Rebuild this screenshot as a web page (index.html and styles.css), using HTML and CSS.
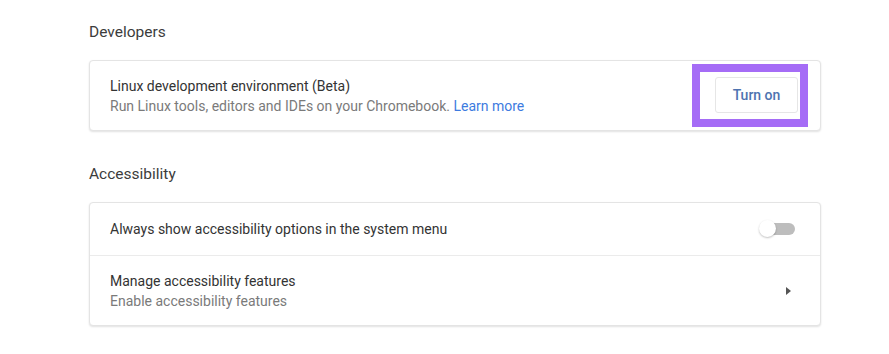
FILE: index.html
```html
<!DOCTYPE html>
<html lang="en">
<head>
    <meta charset="UTF-8">
    <meta name="viewport" content="width=device-width, initial-scale=1.0">
    <title>Settings</title>
    <link rel="stylesheet" href="styles.css">
</head>
<body>

<div class="page">
    <div class="section">
        <h2 class="section-title">Developers</h2>
        <div class="card">
            <div class="row row-tall row-action">
                <div class="row-text">
                    <div class="row-title">Linux development environment (Beta)</div>
                    <div class="row-sub">Run Linux tools, editors and IDEs on your Chromebook. <a href="#" class="link">Learn more</a></div>
                </div>
                <div class="highlight">
                    <button class="action-button">Turn on</button>
                </div>
            </div>
        </div>
    </div>

    <div class="section">
        <h2 class="section-title">Accessibility</h2>
        <div class="card">
            <div class="row row-short">
                <div class="row-text">
                    <div class="row-title">Always show accessibility options in the system menu</div>
                </div>
                <div class="toggle">
                    <div class="toggle-track"></div>
                    <div class="toggle-knob"></div>
                </div>
            </div>
            <div class="row row-tall row-divided">
                <div class="row-text">
                    <div class="row-title">Manage accessibility features</div>
                    <div class="row-sub">Enable accessibility features</div>
                </div>
                <div class="arrow"></div>
            </div>
        </div>
    </div>
</div>

</body>
</html>
```

FILE: styles.css
```css
body {
    margin: 0;
    background: #fff;
    font-family: Roboto, 'Noto Sans', sans-serif;
    color: #333;
}
.page {
    width: 732px;
    padding: 22px 0 0 89px;
}
.section {
    margin-bottom: 33px;
}
.section-title {
    margin: 0 0 18px 0;
    font-size: 15.5px;
    font-weight: 400;
    line-height: 20px;
    color: #3c3c3c;
}
.card {
    background: #fff;
    border: 1px solid #e4e4e4;
    border-radius: 4px;
    box-shadow: 0 1px 2px rgba(0, 0, 0, 0.12);
}
.row {
    display: flex;
    align-items: center;
    justify-content: space-between;
    padding: 0 13px 0 20px;
}
.row-action {
    padding-right: 12px;
}
.row-short {
    height: 52px;
}
.row-tall {
    height: 69px;
}
.row-divided {
    border-top: 1px solid #ebebeb;
}
.row-title {
    font-size: 14px;
    line-height: 20px;
    color: #333;
}
.row-sub {
    font-size: 14px;
    line-height: 20px;
    color: #7a7a7a;
}
.link {
    color: #3d7be0;
    text-decoration: none;
}
.highlight {
    border: 8px solid #a56cf6;
    padding: 5px 2px 6px 15px;
    display: flex;
}
.action-button {
    width: 83px;
    height: 36px;
    background: #fff;
    border: 1px solid #e6e6e6;
    border-radius: 3px;
    font-family: Roboto, sans-serif;
    font-size: 14px;
    font-weight: 500;
    color: #4e73b0;
    cursor: pointer;
}
.toggle {
    position: relative;
    width: 36px;
    height: 20px;
    margin-right: 12px;
}
.toggle-track {
    position: absolute;
    left: 4px;
    top: 4px;
    width: 32px;
    height: 12px;
    border-radius: 6px;
    background: #bdbdbd;
}
.toggle-knob {
    position: absolute;
    left: 0;
    top: 1px;
    width: 17px;
    height: 17px;
    border-radius: 50%;
    background: #fff;
    box-shadow: 0 1px 2px rgba(0, 0, 0, 0.25);
}
.arrow {
    width: 0;
    height: 0;
    border-top: 4px solid transparent;
    border-bottom: 4px solid transparent;
    border-left: 5px solid #555;
    margin-right: 16px;
}
```
